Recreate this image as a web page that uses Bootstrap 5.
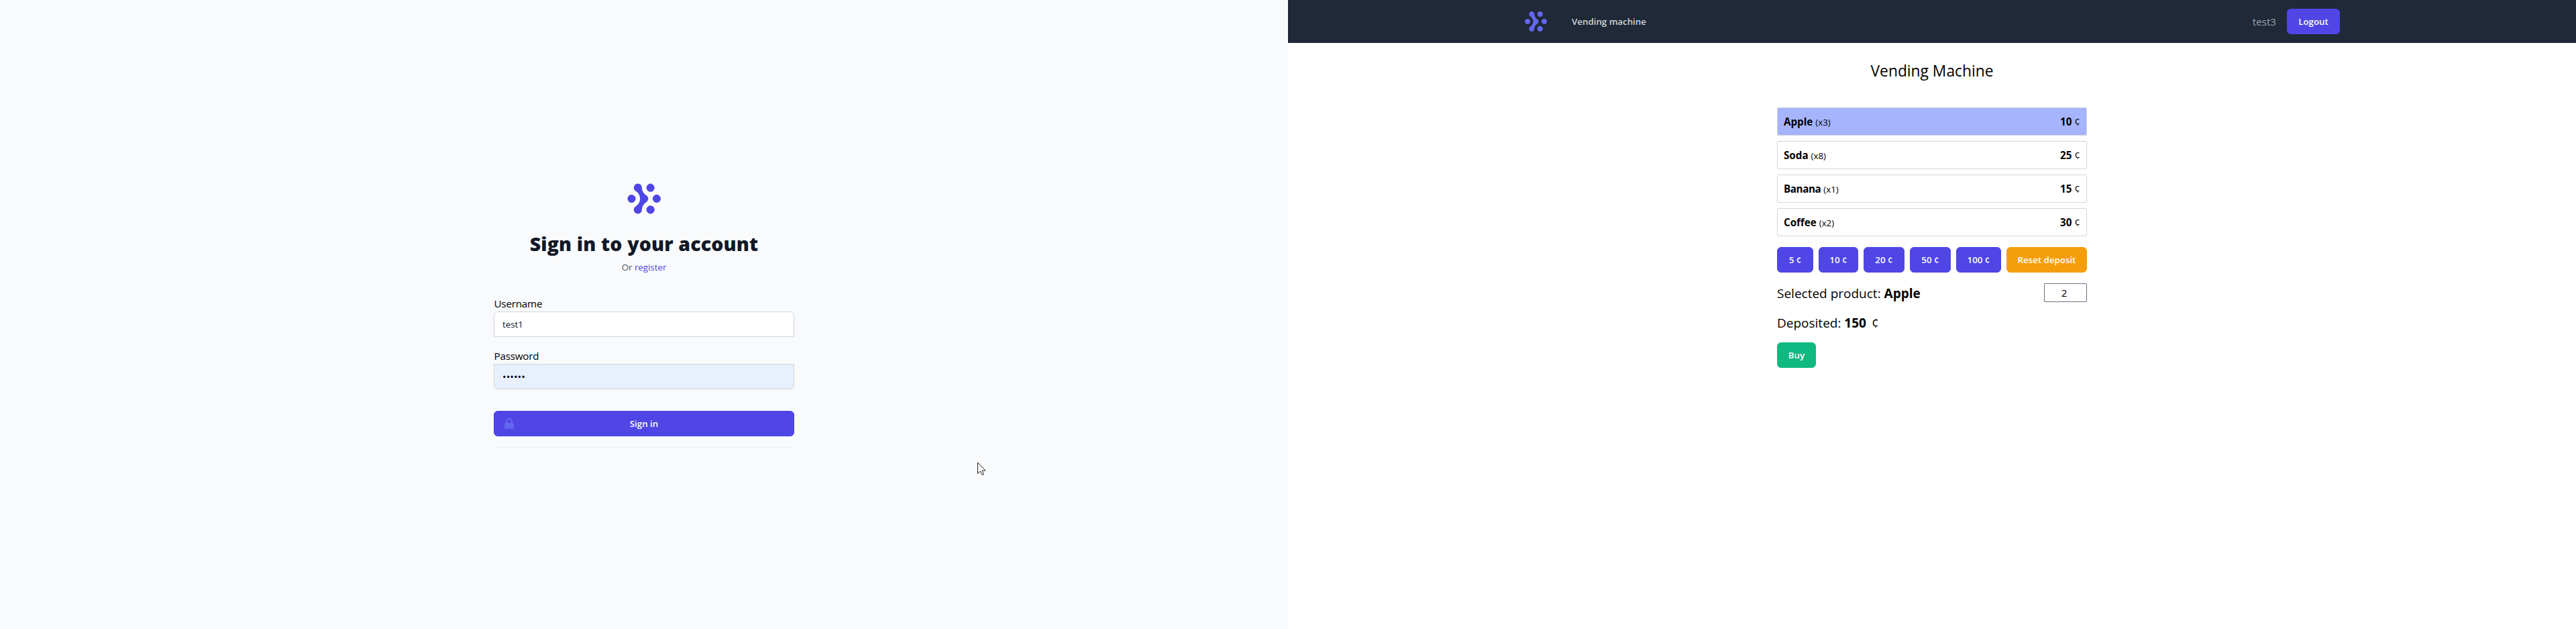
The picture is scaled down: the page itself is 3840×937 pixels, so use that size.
<!DOCTYPE html>
<html lang="en">
<head>
<meta charset="utf-8">
<meta name="viewport" content="width=device-width, initial-scale=1">
<title>Vending machine</title>
<link rel="stylesheet" href="https://cdn.jsdelivr.net/npm/bootstrap@5.3.0/dist/css/bootstrap.min.css">
<style>
  body { font-family: "Open Sans", "Noto Sans", sans-serif; font-size: 15.2px; line-height: 24px; color: #000; background: #fff; }
  .screen { width: 1920px; height: 937px; }
  .screen-login { background: #f9fafb; }
  .indigo { color: #4f46e5; }
  .fs-sm { font-size: 13.3px; line-height: 20px; }
  .brand-mark { width: 52.5px; height: 48px; }
  .login-col { width: 448px; padding-top: 272px; }
  .login-title { font-size: 28.5px; line-height: 36px; font-weight: 800; letter-spacing: .15px; color: #111827; margin: 25px 0 7px; }
  .login-hint { color: #4b5563; }
  .login-form { margin-top: 32px; padding-bottom: 16px; border-radius: 6px; box-shadow: 0 1px 2px rgba(0,0,0,.05); }
  .login-form label { display: block; height: 24px; letter-spacing: -.2px; padding-left: .5px; }
  .field { height: 38px; padding: 0 12px; font-size: 13.3px; line-height: 20px; border: 1px solid #d1d5db; background: #fff; color: #111827; }
  .field-top { border-radius: 6px 6px 0 0; }
  .field-bottom { border-radius: 0 0 6px 6px; background: #e8f0fe; color: #000; font-size: 15px; }
  .btn { --bs-btn-padding-y: 8px; --bs-btn-padding-x: 0; --bs-btn-font-size: 13.3px; --bs-btn-font-weight: 600; --bs-btn-line-height: 20px; --bs-btn-border-radius: 6px; height: 38px; white-space: nowrap; --bs-btn-color: #fff; }
  .btn-indigo { --bs-btn-bg: #4f46e5; --bs-btn-border-color: #4f46e5; }
  .btn-amber { --bs-btn-bg: #f59e0b; --bs-btn-border-color: #f59e0b; width: 120px; }
  .btn-green { --bs-btn-bg: #10b981; --bs-btn-border-color: #10b981; width: 58px; }
  .sign-in { margin-top: 32px; }
  .logout { width: 79px; }
  .coin-sm { width: 54px; }
  .coin-10 { width: 59px; }
  .coin-md { width: 61px; }
  .coin-lg { width: 67px; }
  .lock { left: 12px; top: 8px; width: 20px; height: 20px; color: #6366f1; }
  .pointer { left: 1457px; top: 688px; width: 13px; height: 21px; }
  .topbar { height: 64px; background: #1f2937; padding: 0 352px; }
  .topbar .brand-mark { width: 35px; height: 32px; color: #6366f1; }
  .topbar-link { color: #d1d5db; font-weight: 600; margin-left: 36px; }
  .user-name { color: #9ca3af; margin-right: 16px; }
  .shop { width: 462px; }
  .shop-title { font-size: 22.8px; line-height: 32px; font-weight: 400; margin: 26px 0 38px; }
  .product { height: 42px; padding: 0 9px; border: 1px solid #d1d5db; border-radius: 2px; }
  .product.selected { background: #a5b4fc; }
  .tight { letter-spacing: -.4px; }
  .info-row { font-size: 19px; line-height: 30px; height: 28px; }
  .cents { margin-left: 3px; }
  .qty { width: 64px; height: 28px; border: 1px solid #6b7280; border-radius: 1px; padding: 0 4px 0 0; font-size: 15.2px; }
  b { font-weight: 700; }
</style>
</head>
<body>
<svg class="d-none" xmlns="http://www.w3.org/2000/svg">
  <symbol id="mark-shape" viewBox="0 0 35 32"><path fill="currentColor" d="M15.258 26.865a4.043 4.043 0 01-1.133 2.917A4.006 4.006 0 0111.253 31a3.992 3.992 0 01-2.872-1.218 4.028 4.028 0 01-1.133-2.917c.009-.698.2-1.382.557-1.981.356-.6.863-1.094 1.47-1.433-.024.109.09-.055 0 0l1.86-1.652a8.495 8.495 0 002.304-5.793c0-2.926-1.711-5.901-4.17-7.457.094.055-.036-.094 0 0A3.952 3.952 0 017.8 7.116a3.975 3.975 0 01-.557-1.98 4.042 4.042 0 011.133-2.918A4.006 4.006 0 0111.247 1a3.99 3.99 0 012.872 1.218 4.025 4.025 0 011.133 2.917 8.521 8.521 0 002.347 5.832l.817.8c.326.285.668.551 1.024.798.621.33 1.142.826 1.504 1.431a3.902 3.902 0 01-1.504 5.442c.033-.067-.063.036 0 0a8.968 8.968 0 00-3.024 3.183 9.016 9.016 0 00-1.158 4.244zM19.741 5.123c0 .796.235 1.575.676 2.237a4.01 4.01 0 001.798 1.482 3.99 3.99 0 004.366-.873 4.042 4.042 0 00.869-4.386 4.02 4.02 0 00-1.476-1.806 3.994 3.994 0 00-5.058.501 4.038 4.038 0 00-1.175 2.845zM23.748 22.84c-.792 0-1.567.236-2.226.678a4.021 4.021 0 00-1.476 1.806 4.042 4.042 0 00.869 4.387 3.99 3.99 0 004.366.873A4.01 4.01 0 0027.08 29.1a4.039 4.039 0 00-.5-5.082 4 4 0 00-2.832-1.18zM34 15.994c0-.796-.235-1.574-.675-2.236a4.01 4.01 0 00-1.798-1.483 3.99 3.99 0 00-4.367.873 4.042 4.042 0 00-.869 4.387 4.02 4.02 0 001.476 1.806 3.993 3.993 0 002.226.678 4.003 4.003 0 002.832-1.18A4.04 4.04 0 0034 15.993zM5.007 11.969c-.793 0-1.567.236-2.226.678a4.021 4.021 0 00-1.476 1.807 4.042 4.042 0 00.869 4.386 4.001 4.001 0 004.366.873 4.011 4.011 0 001.798-1.483 4.038 4.038 0 00-.5-5.08 4.004 4.004 0 00-2.831-1.181z"/></symbol>
</svg>
<div class="d-flex">
  <section class="screen screen-login position-relative">
    <div class="login-col mx-auto">
      <div class="text-center">
        <svg class="brand-mark indigo d-block mx-auto"><use href="#mark-shape"/></svg>
        <h1 class="login-title">Sign in to your account</h1>
        <p class="login-hint fs-sm mb-0">Or <a class="indigo text-decoration-none fw-medium" href="#">register</a></p>
      </div>
      <form class="login-form">
        <label>Username</label>
        <div class="field field-top d-flex align-items-center">test1</div>
        <label class="mt-3">Password</label>
        <div class="field field-bottom d-flex align-items-center">••••••</div>
        <button type="button" class="btn btn-indigo sign-in w-100 position-relative"><svg class="lock position-absolute" viewBox="0 0 20 20" fill="currentColor"><path fill-rule="evenodd" d="M5 9V7a5 5 0 0110 0v2a2 2 0 012 2v5a2 2 0 01-2 2H5a2 2 0 01-2-2v-5a2 2 0 012-2zm8-2v2H7V7a3 3 0 016 0z"/></svg>Sign in</button>
      </form>
    </div>
    <svg class="pointer position-absolute" viewBox="0 0 13 21"><path d="M.5 1v16.500l4-3.700 2.600 5.700 2.400-1-2.500-5.500h5z" fill="#fff" stroke="#222"/></svg>
  </section>
  <section class="screen">
    <nav class="topbar d-flex align-items-center">
      <svg class="brand-mark"><use href="#mark-shape"/></svg>
      <a class="topbar-link fs-sm text-decoration-none" href="#">Vending machine</a>
      <span class="user-name ms-auto">test3</span>
      <button type="button" class="btn btn-indigo logout">Logout</button>
    </nav>
    <main class="shop mx-auto">
      <h2 class="shop-title text-center">Vending Machine</h2>
      <div class="d-flex flex-column gap-2">
        <div class="product selected d-flex align-items-center justify-content-between"><div><b>Apple</b> <span class="fs-sm">(x3)</span></div><div><b>10</b> ¢</div></div>
        <div class="product d-flex align-items-center justify-content-between"><div><b>Soda</b> <span class="fs-sm">(x8)</span></div><div><b>25</b> ¢</div></div>
        <div class="product d-flex align-items-center justify-content-between"><div><b class="tight">Banana</b> <span class="fs-sm">(x1)</span></div><div><b>15</b> ¢</div></div>
        <div class="product d-flex align-items-center justify-content-between"><div><b>Coffee</b> <span class="fs-sm">(x2)</span></div><div><b>30</b> ¢</div></div>
      </div>
      <div class="d-flex gap-2 mt-3">
        <button type="button" class="btn btn-indigo coin-sm">5 ¢</button>
        <button type="button" class="btn btn-indigo coin-10">10 ¢</button>
        <button type="button" class="btn btn-indigo coin-md">20 ¢</button>
        <button type="button" class="btn btn-indigo coin-md">50 ¢</button>
        <button type="button" class="btn btn-indigo coin-lg">100 ¢</button>
        <button type="button" class="btn btn-amber">Reset deposit</button>
      </div>
      <div class="info-row d-flex justify-content-between mt-3"><div>Selected product: <b>Apple</b></div><input class="qty text-center" value="2"></div>
      <div class="info-row mt-3">Deposited: <b>150</b> <span class="cents">¢</span></div>
      <button type="button" class="btn btn-green mt-3">Buy</button>
    </main>
  </section>
</div>
<script src="https://cdn.jsdelivr.net/npm/bootstrap@5.3.0/dist/js/bootstrap.bundle.min.js"></script>
</body>
</html>
